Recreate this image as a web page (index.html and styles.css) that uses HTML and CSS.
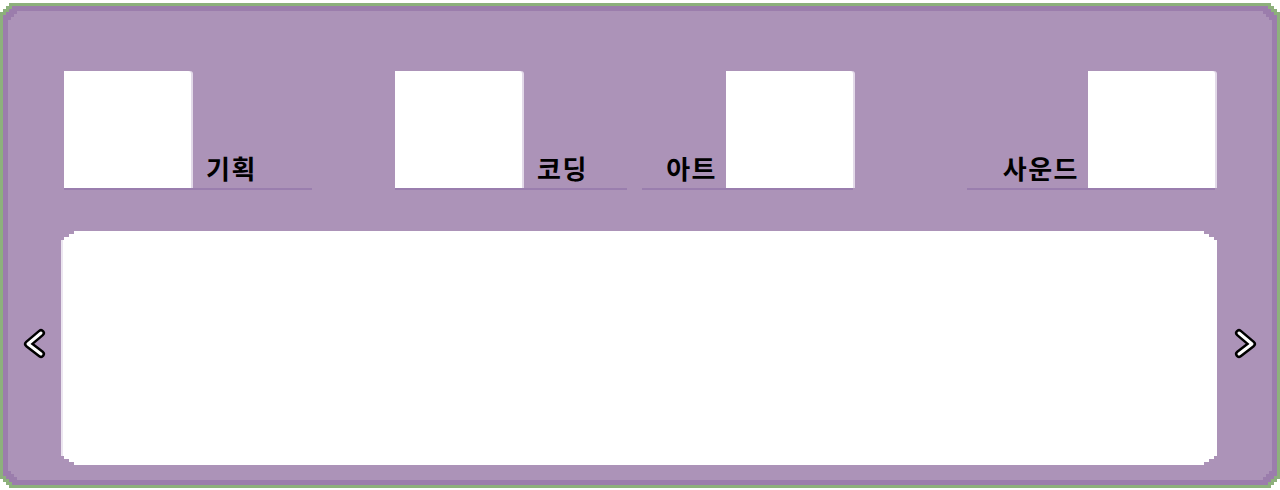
FILE: index.html
```html
<!DOCTYPE html>
<html lang="ko">
<head>
    <meta charset="UTF-8">
    <meta name="viewport" content="width=device-width, initial-scale=1.0">
    <title>메뉴</title>
    <link rel="stylesheet" href="styles.css">
</head>
<body>
    <div class="frame">
        <div class="frame-inner">
            <div class="board">
                <div class="tabs">
                    <div class="tab tab-plan">
                        <div class="tab-box"></div>
                        <div class="tab-label">기획</div>
                    </div>
                    <div class="tab tab-code">
                        <div class="tab-box"></div>
                        <div class="tab-label">코딩</div>
                    </div>
                    <div class="tab tab-art tab-reverse">
                        <div class="tab-label">아트</div>
                        <div class="tab-box"></div>
                    </div>
                    <div class="tab tab-sound tab-reverse">
                        <div class="tab-label">사운드</div>
                        <div class="tab-box"></div>
                    </div>
                </div>

                <div class="viewer">
                    <button class="arrow arrow-left" aria-label="이전">
                        <svg width="26" height="32" viewBox="0 0 26 32">
                            <polyline points="19,5 6,16 19,26" fill="none" stroke="#000" stroke-width="8" stroke-linecap="round" stroke-linejoin="round"/>
                            <polyline points="19,5 6,16 19,26" fill="none" stroke="#fff" stroke-width="3" stroke-linecap="round" stroke-linejoin="round"/>
                        </svg>
                    </button>
                    <div class="panel"></div>
                    <button class="arrow arrow-right" aria-label="다음">
                        <svg width="26" height="32" viewBox="0 0 26 32">
                            <polyline points="7,5 20,16 7,26" fill="none" stroke="#000" stroke-width="8" stroke-linecap="round" stroke-linejoin="round"/>
                            <polyline points="7,5 20,16 7,26" fill="none" stroke="#fff" stroke-width="3" stroke-linecap="round" stroke-linejoin="round"/>
                        </svg>
                    </button>
                </div>
            </div>
        </div>
    </div>
</body>
</html>
```

FILE: styles.css
```css
:root {
    --green: #8db07c;
    --purple-dark: #9b7dac;
    --purple: #ac93b8;
    --line: #9a7eae;
    --step: polygon(
        0 9px, 3px 9px, 3px 6px, 6px 6px, 6px 3px, 9px 3px, 9px 0,
        calc(100% - 9px) 0, calc(100% - 9px) 3px, calc(100% - 6px) 3px, calc(100% - 6px) 6px, calc(100% - 3px) 6px, calc(100% - 3px) 9px, 100% 9px,
        100% calc(100% - 9px), calc(100% - 3px) calc(100% - 9px), calc(100% - 3px) calc(100% - 6px), calc(100% - 6px) calc(100% - 6px), calc(100% - 6px) calc(100% - 3px), calc(100% - 9px) calc(100% - 3px), calc(100% - 9px) 100%,
        9px 100%, 9px calc(100% - 3px), 6px calc(100% - 3px), 6px calc(100% - 6px), 3px calc(100% - 6px), 3px calc(100% - 9px), 0 calc(100% - 9px)
    );
}

* {
    margin: 0;
    padding: 0;
    box-sizing: border-box;
}

body {
    font-family: "Noto Sans CJK KR", "Noto Sans", sans-serif;
    background: #fff;
    padding: 3px 0 0 0;
}

.frame {
    width: 1280px;
    height: 485px;
    padding: 3px;
    background: var(--green);
    clip-path: var(--step);
}

.frame-inner {
    height: 100%;
    padding: 5px;
    background: var(--purple-dark);
    clip-path: var(--step);
}

.board {
    height: 100%;
    background: var(--purple);
    clip-path: var(--step);
    padding-top: 60px;
}

.tabs {
    display: flex;
    margin-left: 56px;
    height: 119px;
}

.tab {
    display: flex;
    align-items: flex-end;
    border-bottom: 2px solid var(--line);
}

.tab-plan { width: 248px; }
.tab-code { width: 232px; margin-left: 83px; }
.tab-art { width: 211px; margin-left: 15px; }
.tab-sound { width: 248px; margin-left: 114px; }

.tab-box {
    width: 127px;
    height: 117px;
    flex-shrink: 0;
    background: #fff;
    border-radius: 0 3px 0 0;
    box-shadow: 2px 0 0 #e2d9e8;
}

.tab-label {
    flex: 1;
    font-size: 26px;
    font-weight: 700;
    line-height: 26px;
    letter-spacing: 1.5px;
    color: #000;
    padding: 0 0 7px 15px;
}

.tab-reverse .tab-label {
    text-align: right;
    padding: 0 9px 7px 0;
}

.viewer {
    display: flex;
    margin-top: 41px;
    height: 234px;
}

.arrow {
    flex: 1;
    background: none;
    border: none;
    display: flex;
    justify-content: center;
    align-items: flex-start;
    padding-top: 97px;
    cursor: pointer;
}

.arrow-left {
    flex: 0 0 53px;
    padding-left: 1px;
}

.panel {
    width: 1156px;
    background: #fff;
    box-shadow: inset 2px 0 0 #ece6f0;
    clip-path: polygon(
        0 9px, 3px 9px, 3px 6px, 8px 6px, 8px 3px, 13px 3px, 13px 0,
        calc(100% - 13px) 0, calc(100% - 13px) 3px, calc(100% - 8px) 3px, calc(100% - 8px) 6px, calc(100% - 3px) 6px, calc(100% - 3px) 9px, 100% 9px,
        100% calc(100% - 9px), calc(100% - 3px) calc(100% - 9px), calc(100% - 3px) calc(100% - 6px), calc(100% - 8px) calc(100% - 6px), calc(100% - 8px) calc(100% - 3px), calc(100% - 13px) calc(100% - 3px), calc(100% - 13px) 100%,
        13px 100%, 13px calc(100% - 3px), 8px calc(100% - 3px), 8px calc(100% - 6px), 3px calc(100% - 6px), 3px calc(100% - 9px), 0 calc(100% - 9px)
    );
}
```
